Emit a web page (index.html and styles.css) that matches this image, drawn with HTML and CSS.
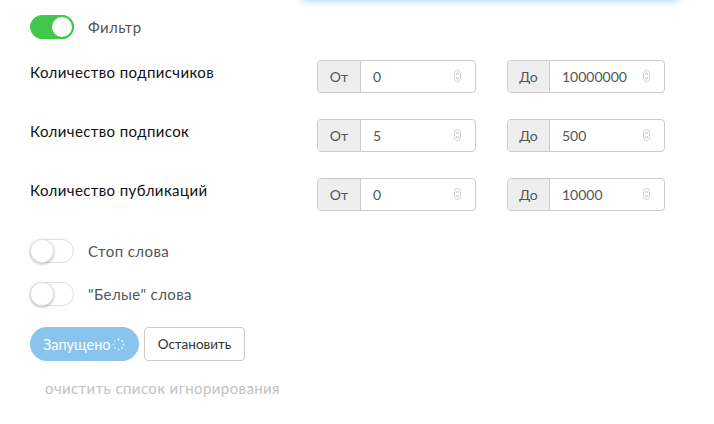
FILE: index.html
```html
<!DOCTYPE html>
<html lang="ru">
<head>
<meta charset="utf-8">
<link rel="stylesheet" href="styles.css">
</head>
<body>
<div class="topcard"></div>
<div class="panel">
  <div class="switch-row first">
    <span class="switch on"><span class="knob"></span></span>
    <span class="switch-label">Фильтр</span>
  </div>

  <div class="range-row">
    <div class="range-label">Количество подписчиков</div>
    <div class="group g1"><span class="addon">От</span><span class="field"><span class="val">0</span><svg class="spin" width="7" height="12" viewBox="0 0 7 12"><rect x="0.5" y="0.5" width="6" height="11" rx="3" fill="#fff" stroke="#cfcfcf"/><path d="M2 4.6 L3.5 3.2 L5 4.6 M2 7.4 L3.5 8.8 L5 7.4" fill="none" stroke="#999" stroke-width="0.8"/></svg></span></div>
    <div class="group g2"><span class="addon">До</span><span class="field"><span class="val">10000000</span><svg class="spin" width="7" height="12" viewBox="0 0 7 12"><rect x="0.5" y="0.5" width="6" height="11" rx="3" fill="#fff" stroke="#cfcfcf"/><path d="M2 4.6 L3.5 3.2 L5 4.6 M2 7.4 L3.5 8.8 L5 7.4" fill="none" stroke="#999" stroke-width="0.8"/></svg></span></div>
  </div>

  <div class="range-row">
    <div class="range-label">Количество подписок</div>
    <div class="group g1"><span class="addon">От</span><span class="field"><span class="val">5</span><svg class="spin" width="7" height="12" viewBox="0 0 7 12"><rect x="0.5" y="0.5" width="6" height="11" rx="3" fill="#fff" stroke="#cfcfcf"/><path d="M2 4.6 L3.5 3.2 L5 4.6 M2 7.4 L3.5 8.8 L5 7.4" fill="none" stroke="#999" stroke-width="0.8"/></svg></span></div>
    <div class="group g2"><span class="addon">До</span><span class="field"><span class="val">500</span><svg class="spin" width="7" height="12" viewBox="0 0 7 12"><rect x="0.5" y="0.5" width="6" height="11" rx="3" fill="#fff" stroke="#cfcfcf"/><path d="M2 4.6 L3.5 3.2 L5 4.6 M2 7.4 L3.5 8.8 L5 7.4" fill="none" stroke="#999" stroke-width="0.8"/></svg></span></div>
  </div>

  <div class="range-row">
    <div class="range-label">Количество публикаций</div>
    <div class="group g1"><span class="addon">От</span><span class="field"><span class="val">0</span><svg class="spin" width="7" height="12" viewBox="0 0 7 12"><rect x="0.5" y="0.5" width="6" height="11" rx="3" fill="#fff" stroke="#cfcfcf"/><path d="M2 4.6 L3.5 3.2 L5 4.6 M2 7.4 L3.5 8.8 L5 7.4" fill="none" stroke="#999" stroke-width="0.8"/></svg></span></div>
    <div class="group g2"><span class="addon">До</span><span class="field"><span class="val">10000</span><svg class="spin" width="7" height="12" viewBox="0 0 7 12"><rect x="0.5" y="0.5" width="6" height="11" rx="3" fill="#fff" stroke="#cfcfcf"/><path d="M2 4.6 L3.5 3.2 L5 4.6 M2 7.4 L3.5 8.8 L5 7.4" fill="none" stroke="#999" stroke-width="0.8"/></svg></span></div>
  </div>

  <div class="switch-row stop">
    <span class="switch"><span class="knob"></span></span>
    <span class="switch-label">Стоп слова</span>
  </div>
  <div class="switch-row white">
    <span class="switch"><span class="knob"></span></span>
    <span class="switch-label">"Белые" слова</span>
  </div>

  <div class="buttons">
    <button class="btn-run">Запущено<svg class="loader" width="13" height="13" viewBox="0 0 13 13">
      <circle cx="6.5" cy="1.5" r="1" fill="#fff"/>
      <circle cx="10.04" cy="2.96" r="1" fill="#fff" opacity="0.9"/>
      <circle cx="11.5" cy="6.5" r="1" fill="#fff" opacity="0.85"/>
      <circle cx="10.04" cy="10.04" r="1" fill="#fff" opacity="0.8"/>
      <circle cx="6.5" cy="11.5" r="1" fill="#fff" opacity="0.7"/>
      <circle cx="2.96" cy="10.04" r="1" fill="#fff" opacity="0.6"/>
      <circle cx="1.5" cy="6.5" r="1" fill="#fff" opacity="0.5"/>
      <circle cx="2.96" cy="2.96" r="1" fill="#fff" opacity="0.4"/>
    </svg></button>
    <button class="btn-stop">Остановить</button>
  </div>

  <div class="clear-link">очистить список игнорирования</div>
</div>
</body>
</html>
```
FILE: styles.css
```css
html, body {
  margin: 0;
  padding: 0;
  background: #fff;
  font-family: Lato, "Noto Sans", sans-serif;
  font-size: 15px;
  color: #222;
}

.topcard {
  height: 10px;
  margin: -10px 36px 0 303px;
  background: #fff;
  box-shadow: 0 1px 7px rgba(70, 150, 225, 0.45);
}

.panel {
  padding-left: 30px;
}

.switch-row {
  display: flex;
  align-items: center;
  height: 24px;
}
.switch-row.first { margin-top: 15px; }
.switch-row.stop { margin-top: 28px; }
.switch-row.white { margin-top: 19px; }

.switch {
  position: relative;
  box-sizing: border-box;
  width: 44px;
  height: 24px;
  border-radius: 12px;
  border: 1px solid #dedede;
  background: #fff;
  flex: none;
}
.switch .knob {
  position: absolute;
  left: -1px;
  top: -1px;
  width: 24px;
  height: 24px;
  box-sizing: border-box;
  border-radius: 50%;
  background: #fff;
  border: 1px solid #e2e2e2;
  box-shadow: 0 1px 3px rgba(0, 0, 0, 0.28);
}
.switch.on {
  background: #41c84b;
  border-color: #41c84b;
}
.switch.on .knob {
  left: auto;
  right: -1px;
  border: 2px solid #41c84b;
  box-shadow: none;
}

.switch-label {
  margin-left: 14px;
  color: #555;
  line-height: 20px;
  letter-spacing: 0.4px;
}

.range-row {
  display: flex;
  align-items: flex-start;
  height: 33px;
  margin-top: 26px;
}
.switch-row.first + .range-row { margin-top: 21px; }

.range-label {
  width: 287px;
  padding-top: 2px;
  line-height: 20px;
  color: #111;
  letter-spacing: 0.4px;
  flex: none;
}

.group {
  display: flex;
  box-sizing: border-box;
  height: 33px;
  border: 1px solid #ccc;
  border-radius: 4px;
  overflow: hidden;
  flex: none;
  font-size: 14px;
}
.group.g1 { width: 159px; }
.group.g2 { width: 158px; margin-left: 31px; }

.addon {
  width: 43px;
  flex: none;
  background: #eee;
  border-right: 1px solid #ccc;
  color: #555;
  display: flex;
  align-items: center;
  justify-content: center;
  box-sizing: border-box;
}
.group.g2 .addon { width: 42px; }

.field {
  flex: 1;
  display: flex;
  align-items: center;
  padding: 0 14px 0 12px;
  color: #555;
}
.field .val { flex: 1; }
.spin { flex: none; margin-top: -2px; }

.buttons {
  display: flex;
  margin-top: 21px;
  gap: 5px;
}
.btn-run, .btn-stop {
  font-family: Lato, "Noto Sans", sans-serif;
  height: 34px;
  box-sizing: border-box;
  cursor: pointer;
}
.btn-run {
  width: 109px;
  border: none;
  border-radius: 17px;
  background: #89c4ef;
  color: #fff;
  display: flex;
  align-items: center;
  padding: 0 0 0 13px;
  font-size: 14.5px;
}
.loader { margin-left: 1px; }
.btn-stop {
  width: 101px;
  border: 1px solid #ccc;
  border-radius: 4px;
  background: #fff;
  color: #333;
  padding: 0;
  font-size: 13.5px;
}

.clear-link {
  margin-top: 17px;
  padding-left: 15px;
  line-height: 20px;
  color: #c2c2c2;
  letter-spacing: 0.4px;
}
```
